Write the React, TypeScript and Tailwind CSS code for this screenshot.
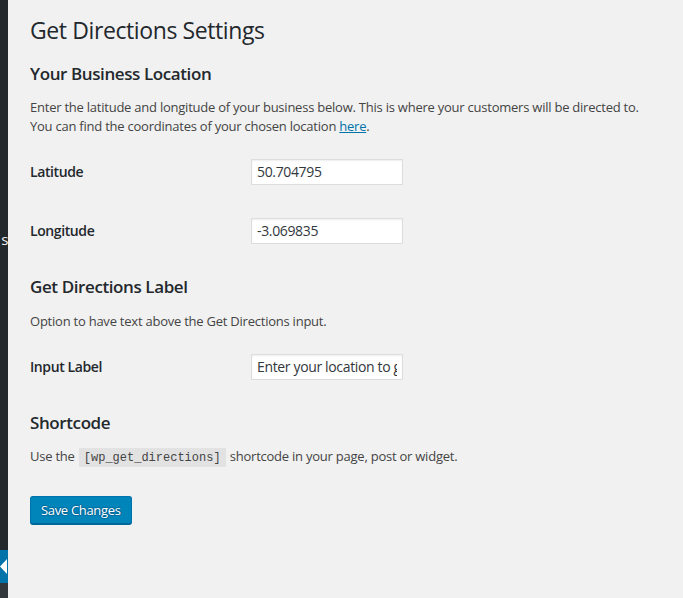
import React from "react";

const font = { fontFamily: '"Open Sans", "Noto Sans", sans-serif', letterSpacing: "-0.025em" };

function Row({ label, value }: { label: string; value: string }) {
  return (
    <div className="flex items-center h-[59px]">
      <div className="w-[221px] shrink-0 text-[14px] font-semibold text-[#23282d]">{label}</div>
      <input
        readOnly
        value={value}
        className="w-[152px] h-[26px] bg-white border border-[#dddddd] shadow-[inset_0_1px_2px_rgba(0,0,0,0.07)] px-[5px] text-[14px] text-[#32373c] outline-none"
        style={font}
      />
    </div>
  );
}

export default function App() {
  return (
    <div className="flex min-h-[598px] bg-[#f1f1f1] text-[#444444]" style={font}>
      <div className="w-2 shrink-0 flex flex-col bg-[#23282d]">
        <div className="h-[230px]" />
        <div className="h-[18px] flex justify-end text-[15px] leading-[18px] text-[#eeeeee] whitespace-nowrap">
          s
        </div>
        <div className="h-[302px]" />
        <div className="h-[33px] bg-[#0073aa] flex items-center">
          <svg width="8" height="16" viewBox="0 0 8 16">
            <path d="M7 0 L0 7.5 L7 15 Z" fill="#ffffff" />
          </svg>
        </div>
        <div className="flex-1 bg-[#32373c]" />
      </div>
      <div className="flex-1 pl-[22px] pr-5">
        <h1 className="pt-4 text-[23px] leading-[29px] font-normal text-[#23282d]">Get Directions Settings</h1>
        <h2 className="mt-[18px] text-[17px] leading-[22px] font-semibold text-[#23282d]">Your Business Location</h2>
        <p className="mt-[13px] text-[13px] leading-[19px]" style={{ letterSpacing: "-0.018em" }}>
          Enter the latitude and longitude of your business below. This is where your customers will be directed to.
          <br />
          You can find the coordinates of your chosen location{" "}
          <a className="text-[#0073aa] underline">here</a>.
        </p>
        <div className="mt-[6px]">
          <Row label="Latitude" value="50.704795" />
          <Row label="Longitude" value="-3.069835" />
        </div>
        <h2 className="mt-[16px] text-[17px] leading-[22px] font-semibold text-[#23282d]">Get Directions Label</h2>
        <p className="mt-[14px] text-[13px] leading-[19px]" style={{ letterSpacing: "-0.018em" }}>
          Option to have text above the Get Directions input.
        </p>
        <div className="mt-[6px]">
          <Row label="Input Label" value="Enter your location to get directions" />
        </div>
        <h2 className="mt-[16px] text-[17px] leading-[22px] font-semibold text-[#23282d]">Shortcode</h2>
        <p className="mt-[13px] text-[13px] leading-[19px]" style={{ letterSpacing: "-0.018em" }}>
          Use the{" "}
          <code
            className="bg-[#e2e2e2] px-[5px] pt-[3px] pb-[2px] mx-[1px] text-[12px]"
            style={{ fontFamily: '"Liberation Mono", "DejaVu Sans Mono", monospace', letterSpacing: "0" }}
          >
            [wp_get_directions]
          </code>{" "}
          shortcode in your page, post or widget.
        </p>
        <button
          className="mt-[28px] h-[28px] px-[10px] rounded-[3px] bg-[#0085ba] border border-[#0073aa] border-b-[#006799] shadow-[0_1px_0_#006799] text-white text-[13px] leading-[26px] [text-shadow:0_-1px_1px_#006799,1px_0_1px_#006799,0_1px_1px_#006799,-1px_0_1px_#006799]"
          style={font}
        >
          Save Changes
        </button>
      </div>
    </div>
  );
}
